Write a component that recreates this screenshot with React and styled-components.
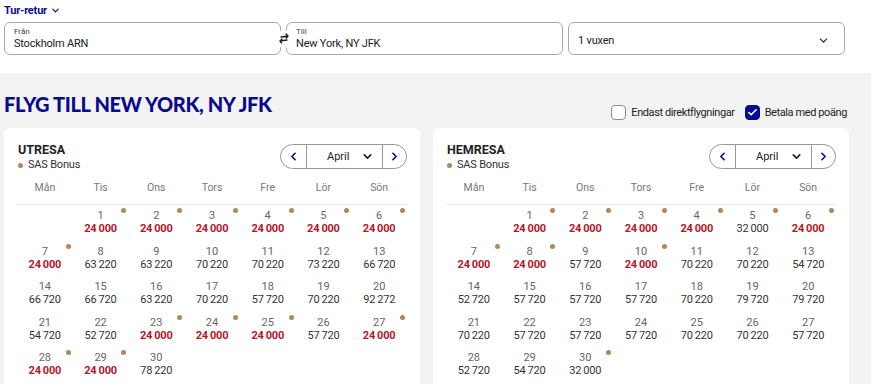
import React from 'react'
import styled, { createGlobalStyle } from 'styled-components'
import { ChevronDown, ChevronLeft, ChevronRight, Check } from 'lucide-react'

const NAVY = '#0a0a8f'
const RED = '#b3172b'
const TAN = '#a98a5c'
const FONT = '"Liberation Sans Narrow", Roboto, "Liberation Sans", sans-serif'

const GlobalStyle = createGlobalStyle`
  body {
    margin: 0;
    font-family: ${FONT};
    background: #f3f3f3;
    color: #222;
  }
`

const TopBar = styled.div`
  background: #fff;
  height: 73px;
  padding: 4px 0 0 4px;
  box-sizing: border-box;
`

const TripType = styled.div`
  display: flex;
  align-items: center;
  gap: 3px;
  color: ${NAVY};
  font-size: 11px;
  font-weight: 700;
  height: 13px;
  letter-spacing: -0.2px;
`

const FieldRow = styled.div`
  display: flex;
  align-items: center;
  margin-top: 5px;
`

const Field = styled.div`
  position: relative;
  width: 277px;
  height: 33px;
  box-sizing: border-box;
  border: 1px solid #a9a9a9;
  border-radius: 6px;
  padding: 4px 9px 0;
  display: flex;
  flex-direction: column;
  justify-content: ${(p) => (p.$select ? 'center' : 'flex-start')};
`

const SelectInner = styled.div`
  display: flex;
  align-items: center;
  justify-content: space-between;
  padding-right: 5px;
  font-size: 11px;
  color: #222;
  letter-spacing: -0.2px;
`

const Label = styled.span`
  font-size: 8px;
  color: #444;
  line-height: 10px;
`

const Value = styled.span`
  font-size: 11px;
  line-height: 14px;
  color: #222;
  letter-spacing: -0.2px;
`

const Swap = styled.div`
  width: 18px;
  height: 18px;
  margin: 0 -6.5px;
  border-radius: 50%;
  background: #fff;
  z-index: 1;
  display: flex;
  align-items: center;
  justify-content: center;
`

const Gap = styled.div`
  width: 5px;
`

const Main = styled.div`
  padding: 19px 22px 0 4px;
`

const TitleRow = styled.div`
  display: flex;
  align-items: flex-end;
  justify-content: space-between;
  height: 24px;
`

const Title = styled.h1`
  margin: 0;
  font-family: Lato, "Liberation Sans", sans-serif;
  font-weight: 900;
  font-size: 20px;
  line-height: 24px;
  color: ${NAVY};
  letter-spacing: -0.35px;
`

const Options = styled.div`
  display: flex;
  align-items: center;
  gap: 10px;
  margin-bottom: -4px;
  margin-right: 2px;
`

const Option = styled.label`
  display: flex;
  align-items: center;
  gap: 5px;
  font-size: 11px;
  color: #222;
  letter-spacing: -0.4px;
`

const Box = styled.span`
  width: 15px;
  height: 15px;
  box-sizing: border-box;
  border-radius: 4px;
  border: 1px solid ${(p) => (p.$on ? NAVY : '#8a8a8a')};
  background: ${(p) => (p.$on ? NAVY : '#fff')};
  display: flex;
  align-items: center;
  justify-content: center;
`

const Cards = styled.div`
  display: grid;
  grid-template-columns: 1fr 1fr;
  gap: 13px;
  margin-top: 12px;
`

const Card = styled.div`
  background: #fff;
  border-radius: 6px;
  padding: 14px 13px 10px;
  min-height: 260px;
`

const CardHead = styled.div`
  display: flex;
  justify-content: space-between;
  align-items: flex-start;
`

const Leg = styled.div`
  font-size: 12.5px;
  font-weight: 700;
  color: #222;
  line-height: 15px;
  padding-left: 1px;
`

const Bonus = styled.div`
  display: flex;
  align-items: center;
  gap: 5px;
  margin-top: 1px;
  font-size: 11px;
  line-height: 14px;
  color: #333;
  font-weight: 400;
  padding-left: 1px;
  letter-spacing: -0.2px;
`

const Dot = styled.span`
  width: 5px;
  height: 5px;
  border-radius: 50%;
  background: ${TAN};
`

const MonthPicker = styled.div`
  display: flex;
  align-items: stretch;
  height: 25px;
  box-sizing: border-box;
  border: 1px solid #999;
  border-radius: 13px;
  margin-top: 2px;
  overflow: hidden;
`

const Arrow = styled.div`
  width: ${(p) => p.$w}px;
  display: flex;
  align-items: center;
  justify-content: center;
  color: ${NAVY};
`

const Month = styled.div`
  width: 77px;
  border-left: 1px solid #999;
  border-right: 1px solid #999;
  display: flex;
  align-items: center;
  justify-content: space-between;
  padding: 0 8px 0 20px;
  box-sizing: border-box;
  font-size: 11px;
  color: #222;
`

const Grid = styled.div`
  display: grid;
  grid-template-columns: repeat(7, 1fr);
  margin-top: 8px;
`

const WeekDay = styled.div`
  text-align: center;
  font-size: 10.5px;
  color: #777;
  height: 24px;
  line-height: 16px;
  border-bottom: 1px solid #ececec;
`

const Cell = styled.div`
  position: relative;
  height: 35.6px;
  padding-top: 5px;
  box-sizing: border-box;
  display: flex;
  flex-direction: column;
  align-items: center;
`

const DayNum = styled.span`
  font-size: 11px;
  line-height: 12px;
  color: #666;
`

const Price = styled.span`
  font-size: 11px;
  line-height: 13px;
  letter-spacing: -0.2px;
  color: ${(p) => (p.$low ? RED : '#333')};
  font-weight: ${(p) => (p.$low ? 700 : 400)};
`

const CellDot = styled(Dot)`
  position: absolute;
  top: 3px;
  right: 2px;
`

const WEEK = ['Mån', 'Tis', 'Ons', 'Tors', 'Fre', 'Lör', 'Sön']

// [price, dot]
const OUT = [
  [24000, 1], [24000, 1], [24000, 1], [24000, 1], [24000, 1], [24000, 1],
  [24000, 1], [63220], [63220], [70220], [70220], [73220], [66720],
  [66720], [66720], [63220], [70220], [57720], [70220], [92272],
  [54720], [52720], [24000, 1], [24000, 1], [24000, 1], [57720], [24000, 1],
  [24000, 1], [24000, 1], [78220],
]

const HOME = [
  [24000, 1], [24000, 1], [24000, 1], [24000, 1], [32000, 1], [24000, 1],
  [24000, 1], [24000, 1], [57720], [24000, 1], [70220], [70220], [54720],
  [52720], [57720], [57720], [57720], [70220], [79720], [79720],
  [70220], [57720], [57720], [57720], [70220], [70220], [57720],
  [52720], [54720], [32000, 1],
]

const fmt = (n) => {
  const s = String(n)
  return s.slice(0, s.length - 3) + '\u2009' + s.slice(-3)
}

const Calendar = ({ leg, days }) => (
  <Card>
    <CardHead>
      <div>
        <Leg>{leg}</Leg>
        <Bonus><Dot />SAS Bonus</Bonus>
      </div>
      <MonthPicker>
        <Arrow $w={25}><ChevronLeft size={13} strokeWidth={3} /></Arrow>
        <Month>April<ChevronDown size={13} strokeWidth={3} color="#222" /></Month>
        <Arrow $w={23}><ChevronRight size={13} strokeWidth={3} /></Arrow>
      </MonthPicker>
    </CardHead>
    <Grid>
      {WEEK.map((w) => <WeekDay key={w}>{w}</WeekDay>)}
      <Cell />
      {days.map(([price, dot], i) => (
        <Cell key={i}>
          {dot && <CellDot />}
          <DayNum>{i + 1}</DayNum>
          <Price $low={price === 24000}>{fmt(price)}</Price>
        </Cell>
      ))}
    </Grid>
  </Card>
)

const SwapIcon = () => (
  <svg width="12" height="11" viewBox="0 0 12 11" fill="none" stroke="#222" strokeWidth="1.4" strokeLinecap="round" strokeLinejoin="round">
    <path d="M3 4 L10 3 M8 1 L10 3 L8.4 5" />
    <path d="M9 7 L2 8 M4 6 L2 8 L3.6 10" />
  </svg>
)

export default function App() {
  return (
    <>
      <GlobalStyle />
      <TopBar>
        <TripType>Tur-retur <ChevronDown size={11} strokeWidth={2.5} /></TripType>
        <FieldRow>
          <Field>
            <Label>Från</Label>
            <Value>Stockholm ARN</Value>
          </Field>
          <Swap><SwapIcon /></Swap>
          <Field>
            <Label>Till</Label>
            <Value>New York, NY JFK</Value>
          </Field>
          <Gap />
          <Field $select>
            <SelectInner>1 vuxen <ChevronDown size={13} strokeWidth={2} /></SelectInner>
          </Field>
        </FieldRow>
      </TopBar>
      <Main>
        <TitleRow>
          <Title>FLYG TILL NEW YORK, NY JFK</Title>
          <Options>
            <Option><Box />Endast direktflygningar</Option>
            <Option><Box $on><Check size={11} strokeWidth={3.5} color="#fff" /></Box>Betala med poäng</Option>
          </Options>
        </TitleRow>
        <Cards>
          <Calendar leg="UTRESA" days={OUT} />
          <Calendar leg="HEMRESA" days={HOME} />
        </Cards>
      </Main>
    </>
  )
}
